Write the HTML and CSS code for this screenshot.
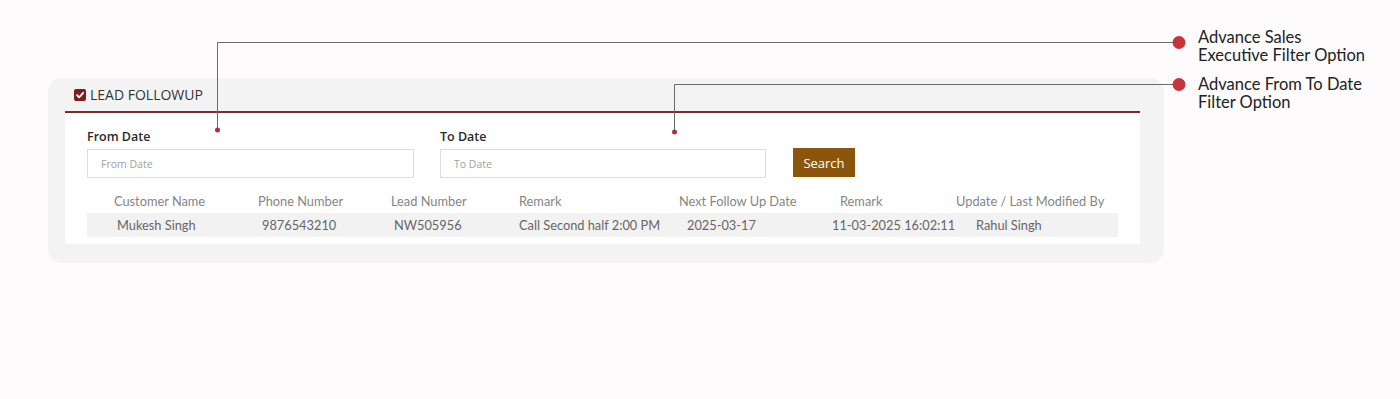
FILE: index.html
```html
<!DOCTYPE html>
<html lang="en">
<head>
  <meta charset="UTF-8">
  <title>Lead Followup</title>
  <link rel="stylesheet" href="styles.css">
</head>
<body>
  <div class="card">
    <!-- header -->
    <div class="card-head">
      <svg class="check" width="12" height="12" viewBox="0 0 12 12">
        <rect width="12" height="12" rx="2" fill="#7a1e22"/>
        <path d="M3 6.2 L5.1 8.3 L9.2 3.8" fill="none" stroke="#fff" stroke-width="1.8" stroke-linecap="round" stroke-linejoin="round"/>
      </svg>
      <span>LEAD FOLLOWUP</span>
    </div>

    <div class="panel">
      <!-- filters -->
      <div class="filters">
        <div class="field">
          <label>From Date</label>
          <input type="text" placeholder="From Date">
        </div>
        <div class="field">
          <label>To Date</label>
          <input type="text" placeholder="To Date">
        </div>
        <button class="btn-search">Search</button>
      </div>

      <!-- results -->
      <table class="list">
        <colgroup>
          <col style="width:171px">
          <col style="width:133px">
          <col style="width:128px">
          <col style="width:160px">
          <col style="width:153px">
          <col style="width:124px">
          <col style="width:162px">
        </colgroup>
        <thead>
          <tr>
            <th>Customer Name</th>
            <th>Phone Number</th>
            <th>Lead Number</th>
            <th>Remark</th>
            <th>Next Follow Up Date</th>
            <th>Remark</th>
            <th>Update / Last Modified By</th>
          </tr>
        </thead>
        <tbody>
          <tr>
            <td>Mukesh Singh</td>
            <td>9876543210</td>
            <td>NW505956</td>
            <td>Call Second half 2:00 PM</td>
            <td>2025-03-17</td>
            <td>11-03-2025 16:02:11</td>
            <td>Rahul Singh</td>
          </tr>
        </tbody>
      </table>
    </div>
  </div>

  <!-- callouts -->
  <svg class="callout-lines" width="1400" height="399" viewBox="0 0 1400 399">
    <path d="M217.5 130 V42.5 H1180" fill="none" stroke="#6b6b6b" stroke-width="1"/>
    <path d="M674.5 132 V84.5 H1180" fill="none" stroke="#6b6b6b" stroke-width="1"/>
    <circle cx="217.5" cy="130" r="2.5" fill="#a8323a"/>
    <circle cx="674.5" cy="132" r="2.5" fill="#a8323a"/>
    <circle cx="1179" cy="42.5" r="6.5" fill="#c9343a"/>
    <circle cx="1179" cy="84.5" r="6.5" fill="#c9343a"/>
  </svg>
  <div class="callouts">
    <p>Advance Sales<br>Executive Filter Option</p>
    <p>Advance From To Date<br>Filter Option</p>
  </div>
</body>
</html>
```

FILE: styles.css
```css
body {
  margin: 0;
  background: #fdfbfb;
  font-family: "Open Sans", "Noto Sans", sans-serif;
}
.card {
  width: 1075px;
  margin: 78px 0 0 48px;
  padding: 0 24px 19px 17px;
  background: #f3f3f3;
  border-radius: 14px;
}
.card-head {
  display: flex;
  align-items: center;
  height: 35px;
  padding: 0 0 0 9px;
  box-sizing: border-box;
  border-bottom: 2px solid #7b2a2e;
  font-size: 14px;
  color: #333;
}
.check {
  margin-right: 4px;
}
.panel {
  background: #fff;
  padding: 15px 22px 7px;
}
.filters {
  display: flex;
  align-items: flex-end;
  margin-bottom: 14px;
}
.field {
  display: flex;
  flex-direction: column;
  margin-right: 26px;
}
.field label {
  font-size: 12.5px;
  font-weight: 600;
  color: #2a2a2a;
  line-height: 18px;
  margin-bottom: 3px;
}
.field input {
  width: 327px;
  height: 29px;
  box-sizing: border-box;
  border: 1px solid #dcdcdc;
  padding: 0 13px;
  font-family: "Open Sans", sans-serif;
  font-size: 10.5px;
  color: #555;
}
.field input::placeholder {
  color: #a0a0a0;
}
.field + .field input {
  width: 326px;
}
.btn-search {
  width: 62px;
  height: 29px;
  margin: 0 0 1px 1px;
  border: none;
  background: #8b560c;
  color: #fff;
  font-family: "Open Sans", sans-serif;
  font-size: 13px;
}
.list {
  width: 1031px;
  table-layout: fixed;
  border-collapse: collapse;
  font-family: Lato, "Noto Sans", sans-serif;
  font-size: 12.8px;
  white-space: nowrap;
}
.list th {
  font-weight: normal;
  color: #858585;
  text-align: left;
  padding: 0 0 3px 0;
  height: 18px;
}
.list td {
  background: #f2f2f2;
  color: #666;
  height: 24px;
  padding: 0;
}
.list th:nth-child(1) { padding-left: 27px; }
.list th:nth-child(6) { padding-left: 8px; }
.list td:nth-child(1) { padding-left: 30px; }
.list td:nth-child(2) { padding-left: 4px; }
.list td:nth-child(3) { padding-left: 3px; }
.list td:nth-child(5) { padding-left: 8px; }
.list td:nth-child(7) { padding-left: 20px; }

.callout-lines {
  position: absolute;
  left: 0;
  top: 0;
  pointer-events: none;
}
.callouts {
  position: absolute;
  left: 1198px;
  top: 28px;
  font-family: Lato, "Noto Sans", sans-serif;
  font-size: 16.5px;
  line-height: 18px;
  color: #222;
}
.callouts p {
  margin: 0 0 11px;
}
```
